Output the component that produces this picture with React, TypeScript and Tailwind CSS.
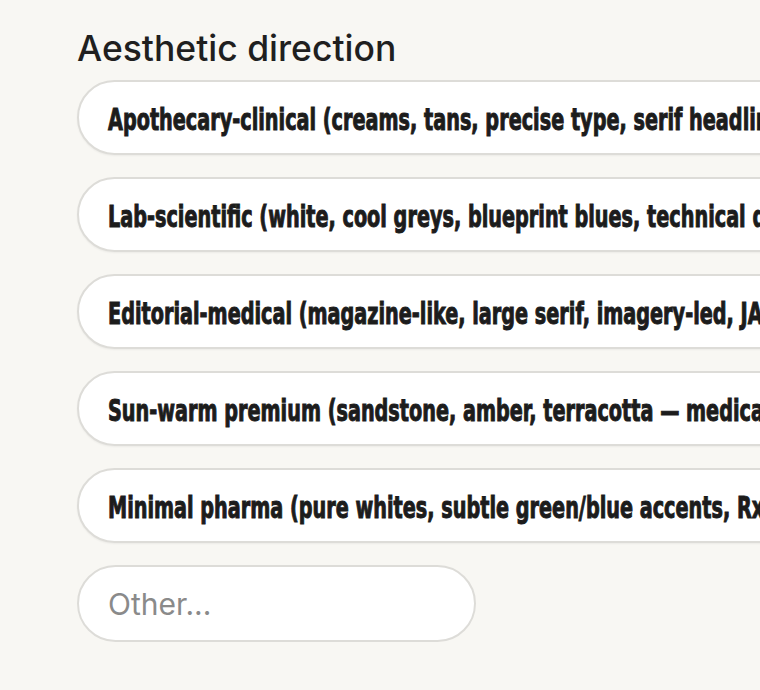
const options = [
  "Apothecary-clinical (creams, tans, precise type, serif headlines, muted greens)",
  "Lab-scientific (white, cool greys, blueprint blues, technical diagrams, mono accents)",
  "Editorial-medical (magazine-like, large serif, imagery-led, JAMA-meets-Kinfolk)",
  "Sun-warm premium (sandstone, amber, terracotta — medical but inviting)",
  "Minimal pharma (pure whites, subtle green/blue accents, Rx-label typography)",
];

export default function App() {
  return (
    <div className="min-h-[690px] w-[760px] overflow-hidden bg-[#f8f7f3] pl-[77px] pt-[29px] font-['Inter',sans-serif]">
      <h2 className="mb-[11px] text-[35.5px] leading-[40px] font-medium text-[#1f1f1f]">
        Aesthetic direction
      </h2>
      <div className="flex flex-col gap-[22px]">
        {options.map((o) => (
          <button
            key={o}
            className="flex h-[75px] w-[900px] shrink-0 items-center overflow-hidden whitespace-nowrap rounded-full border-2 border-[#dddcd8] bg-white pt-[7px] pl-[29px] text-left text-[#1c1c1c] shadow-[0_1px_2px_rgba(0,0,0,0.05)]"
          >
            <span className="inline-block origin-left scale-x-[0.725] font-['DejaVu_Sans_Condensed',sans-serif] text-[29.5px] leading-none font-bold [-webkit-text-stroke:1px_#1c1c1c]">
              {o}
            </span>
          </button>
        ))}
        <input
          placeholder="Other..."
          className="h-[77px] w-[399px] rounded-full border-2 border-[#dddcd8] bg-white pl-[29px] text-[30px] text-[#222] outline-none placeholder:text-[#8a8a8a]"
        />
      </div>
    </div>
  );
}
